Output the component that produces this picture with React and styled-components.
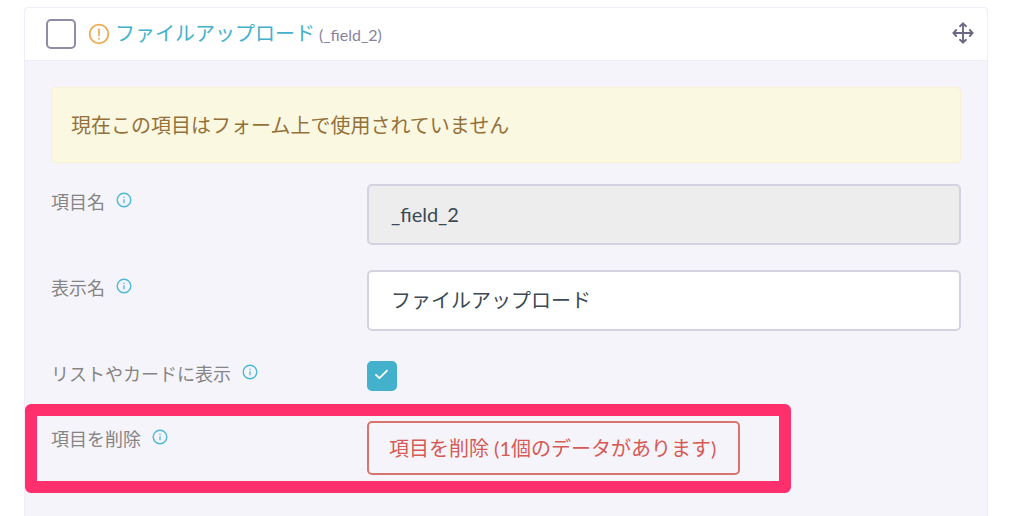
import React, { useState } from 'react';
import styled, { createGlobalStyle } from 'styled-components';

const GlobalStyle = createGlobalStyle`
  *, *::before, *::after {
    box-sizing: border-box;
  }

  body {
    margin: 0;
    background: #fff;
    font-family: Lato, 'Noto Sans CJK JP', sans-serif;
    font-size: 20px;
    color: #3b4a54;
  }

  input, button {
    font: inherit;
  }
`;

const Page = styled.main`
  padding: 7px 36px 0 24px;
`;

const Card = styled.section`
  display: flex;
  flex-direction: column;
  min-height: calc(100vh - 7px);
  border: 1px solid #eeedf8;
  border-bottom: none;
  border-radius: 4px 4px 0 0;
  background: #f5f4fa;
`;

const CardHeader = styled.header`
  display: flex;
  align-items: center;
  justify-content: space-between;
  height: 53px;
  padding: 0 13px 0 21px;
  border-bottom: 1px solid #eeedf8;
  border-radius: 4px 4px 0 0;
  background: #fff;
`;

const HeaderGroup = styled.div`
  display: flex;
  align-items: center;
`;

const WarningIcon = styled.svg`
  width: 22px;
  height: 22px;
  margin: 0 5px 0 12px;
`;

const Title = styled.a`
  padding-bottom: 2px;
  color: #43b1cc;
  line-height: 30px;
  text-decoration: none;
`;

const FieldId = styled.span`
  margin-left: 4px;
  padding-top: 2px;
  color: #8783a0;
  font-size: 16px;
  line-height: 30px;
`;

const MoveButton = styled.button`
  display: flex;
  padding: 0 0 2px;
  border: none;
  background: none;
  color: #6a6885;
  cursor: move;
`;

const CardBody = styled.div`
  padding: 26px;
`;

const Notice = styled.p`
  margin: 0 0 21px;
  padding: 22px 19px;
  border: 1px solid #f8f1d2;
  border-radius: 4px;
  background: #fbf8e2;
  color: #94713a;
  line-height: 30px;
`;

const Form = styled.form`
  display: grid;
  gap: 25px;
`;

const Row = styled.div`
  position: relative;
  display: grid;
  grid-template-columns: 316px 1fr;
  align-items: start;
`;

const HighlightFrame = styled.div`
  position: absolute;
  top: -17px;
  left: -26px;
  width: 766px;
  height: 89px;
  border: 12px solid #ff2f6e;
  border-radius: 6px;
  pointer-events: none;
`;

const LabelCell = styled.div`
  display: flex;
  align-items: center;
  gap: 11px;
  color: #858585;
  font-size: 18px;
  line-height: 36px;
`;

const HelpIcon = styled.svg`
  width: 16px;
  height: 16px;
  margin-bottom: 4px;
`;

const TextInput = styled.input`
  width: 100%;
  height: 61px;
  padding: 0 22px 2px;
  border: 2px solid #d3d2e0;
  border-radius: 5px;
  outline: none;
  background: ${props => props.readOnly ? '#ededed' : '#fff'};
  color: #3b4a54;
`;

const CheckCell = styled.div`
  padding: 5px 0;
`;

const CheckWrap = styled.span`
  display: grid;
  width: 30px;
  height: 30px;

  > * {
    grid-area: 1 / 1;
  }
`;

const CheckInput = styled.input`
  appearance: none;
  width: 30px;
  height: 30px;
  margin: 0;
  border: 2px solid #8f8ca6;
  border-radius: 5px;
  background: #fff;

  &:checked {
    border-color: #43b1cc;
    background: #43b1cc;
  }
`;

const CheckMark = styled.svg`
  width: 30px;
  height: 30px;
  pointer-events: none;
`;

const DeleteButton = styled.button`
  justify-self: start;
  height: 54px;
  padding: 0 22px 2px 20px;
  border: 2px solid #d8736d;
  border-radius: 5px;
  background: transparent;
  color: #d65a56;
  cursor: pointer;
`;

const CheckBox = ({ id, checked, onChange, label }) => (
  <CheckWrap>
    <CheckInput id={id} type="checkbox" checked={checked} onChange={onChange} aria-label={label} />
    {checked && (
      <CheckMark viewBox="0 0 30 30" fill="none" stroke="#fff" strokeWidth="1.8" strokeLinecap="round" strokeLinejoin="round" aria-hidden="true">
        <path d="M9 13.8 L12.4 17.2 L20 9.6" />
      </CheckMark>
    )}
  </CheckWrap>
);

const FieldLabel = ({ htmlFor, children }) => (
  <LabelCell>
    <label htmlFor={htmlFor}>{children}</label>
    <HelpIcon viewBox="0 0 16 16" fill="none" stroke="#4db9d6" aria-hidden="true">
      <circle cx="8" cy="8" r="6.8" strokeWidth="1.4" />
      <path d="M8 7.2V11.2" strokeWidth="1.3" />
      <path d="M8 4.8V6.1" strokeWidth="1.3" />
    </HelpIcon>
  </LabelCell>
);

const App = () => {
  const [selected, setSelected] = useState(false);
  const [displayName, setDisplayName] = useState('ファイルアップロード');
  const [listed, setListed] = useState(true);

  return (
    <>
      <GlobalStyle />
      <Page>
        <Card>
          <CardHeader>
            <HeaderGroup>
              <CheckBox
                id="select-field"
                label="項目を選択"
                checked={selected}
                onChange={e => setSelected(e.target.checked)}
              />
              <WarningIcon viewBox="0 0 22 22" fill="none" stroke="#efab52" strokeLinecap="round" aria-hidden="true">
                <circle cx="11" cy="11" r="9.3" strokeWidth="1.8" />
                <path d="M11 6V12.4" strokeWidth="1.7" />
                <path d="M11 15.6V15.8" strokeWidth="1.9" />
              </WarningIcon>
              <Title href="#field_2">ファイルアップロード</Title>
              <FieldId>(_field_2)</FieldId>
            </HeaderGroup>
            <MoveButton type="button" aria-label="移動">
              <svg width="22" height="22" viewBox="0 0 22 22" fill="none" stroke="currentColor" strokeWidth="1.9" strokeLinecap="round" strokeLinejoin="round" aria-hidden="true">
                <path d="M11 1.5V20.5M1.5 11H20.5" />
                <path d="M8 4.2L11 1.5L14 4.2M8 17.8L11 20.5L14 17.8" />
                <path d="M4.2 8L1.5 11L4.2 14M17.8 8L20.5 11L17.8 14" />
              </svg>
            </MoveButton>
          </CardHeader>
          <CardBody>
            <Notice>現在この項目はフォーム上で使用されていません</Notice>
            <Form onSubmit={e => e.preventDefault()}>
              <Row>
                <FieldLabel htmlFor="field-name">項目名</FieldLabel>
                <TextInput id="field-name" type="text" value="_field_2" readOnly />
              </Row>
              <Row>
                <FieldLabel htmlFor="display-name">表示名</FieldLabel>
                <TextInput
                  id="display-name"
                  type="text"
                  value={displayName}
                  onChange={e => setDisplayName(e.target.value)}
                />
              </Row>
              <Row>
                <FieldLabel htmlFor="show-in-list">リストやカードに表示</FieldLabel>
                <CheckCell>
                  <CheckBox id="show-in-list" checked={listed} onChange={e => setListed(e.target.checked)} />
                </CheckCell>
              </Row>
              <Row>
                <FieldLabel htmlFor="delete-field">項目を削除</FieldLabel>
                <DeleteButton id="delete-field" type="button">項目を削除 (1個のデータがあります)</DeleteButton>
                <HighlightFrame />
              </Row>
            </Form>
          </CardBody>
        </Card>
      </Page>
    </>
  );
};

export default App;
